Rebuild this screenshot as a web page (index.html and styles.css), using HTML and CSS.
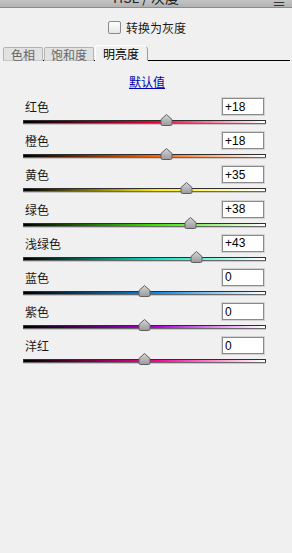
FILE: index.html
```html
<!DOCTYPE html>
<html lang="zh-CN">
<head>
  <meta charset="UTF-8" />
  <title>HSL / 灰度</title>
  <link rel="stylesheet" href="styles.css">
</head>
<body>
  <header class="titlebar">
    <span class="title">HSL / 灰度</span>
    <span class="menu-icon">&#8801;</span>
  </header>

  <div class="gray-toggle">
    <label><span class="checkbox"></span>转换为灰度</label>
  </div>

  <div class="tabs">
    <div class="tab">色相</div>
    <div class="tab">饱和度</div>
    <div class="tab active">明亮度</div>
  </div>

  <div class="defaults"><a href="#">默认值</a></div>

  <div class="sliders" id="sliders"></div>

  <svg width="0" height="0" class="defs">
    <defs>
      <linearGradient id="thumbFill" x1="0" y1="0" x2="0" y2="1">
        <stop offset="0" stop-color="#d6d6d6" />
        <stop offset="1" stop-color="#9a9a9a" />
      </linearGradient>
    </defs>
  </svg>

  <script>
    const canais = [
      { nome: "红色", valor: 18, cor: "#f2003a" },
      { nome: "橙色", valor: 18, cor: "#ff6400" },
      { nome: "黄色", valor: 35, cor: "#ffec00" },
      { nome: "绿色", valor: 38, cor: "#3ce600" },
      { nome: "浅绿色", valor: 43, cor: "#00e6c4" },
      { nome: "蓝色", valor: 0, cor: "#0a8ae8" },
      { nome: "紫色", valor: 0, cor: "#b400dc" },
      { nome: "洋红", valor: 0, cor: "#ff0098" }
    ];

    const lista = document.getElementById("sliders");
    canais.forEach((c) => {
      const texto = c.valor > 0 ? "+" + c.valor : String(c.valor);
      const pos = 50 + c.valor / 2;
      lista.innerHTML += `
        <div class="row">
          <div class="row-head">
            <span class="label">${c.nome}</span>
            <input class="value" value="${texto}">
          </div>
          <div class="track" style="--cor:${c.cor}">
            <svg class="thumb" style="left:${pos}%" width="13" height="12" viewBox="0 0 13 12">
              <path d="M6.5 0.5 L12 5.5 V10 Q12 11.5 10.5 11.5 H2.5 Q1 11.5 1 10 V5.5 Z"
                    fill="url(#thumbFill)" stroke="#5e5e5e" stroke-width="1" />
            </svg>
          </div>
        </div>
      `;
    });
  </script>
</body>
</html>
```

FILE: styles.css
```css
* {
  box-sizing: border-box;
}
body {
  margin: 0;
  background-color: #f0f0f0;
  font-family: "Noto Sans CJK SC", "Liberation Sans", sans-serif;
  font-size: 12px;
  color: #1a1a1a;
}
.defs {
  position: absolute;
}
.titlebar {
  height: 8px;
  overflow: hidden;
  background: linear-gradient(#c4c4c4, #b2b2b2);
  border-bottom: 1px solid #8c8c8c;
  display: flex;
  justify-content: center;
  position: relative;
}
.title {
  font-size: 14px;
  line-height: 14px;
  margin-top: -10px;
  color: #222;
}
.menu-icon {
  position: absolute;
  right: 6px;
  top: -9px;
  font-size: 14px;
  color: #333;
}
.gray-toggle {
  display: flex;
  justify-content: center;
  padding: 12px 0 0 0;
  height: 37px;
}
.gray-toggle label {
  display: flex;
  align-items: center;
  gap: 5px;
  height: 14px;
  margin-left: 2px;
}
.checkbox {
  width: 13px;
  height: 13px;
  border: 1px solid #8a8a8a;
  border-radius: 2px;
  background: linear-gradient(#fdfdfd, #e6e6e6);
}
.tabs {
  display: flex;
  align-items: flex-end;
  margin: 0 2px 0 3px;
  height: 16px;
  border-bottom: 1px solid #000;
}
.tab {
  height: 14px;
  line-height: 13px;
  padding: 0 6px;
  margin-right: 1px;
  margin-bottom: -1px;
  color: #666;
  background: #e2e2e2;
  border: 1px solid #b4b4b4;
  border-bottom: 1px solid #c8c8c8;
  border-radius: 2px 2px 0 0;
}
.tab:first-child {
  padding: 0 7px;
}
.tab.active {
  height: 16px;
  line-height: 15px;
  color: #000;
  background: #f0f0f0;
  border-color: #fff #9a9a9a #f0f0f0 #fff;
  border-radius: 3px 5px 0 0;
  padding: 0 8px 0 7px;
}
.defaults {
  text-align: center;
  padding-top: 12px;
  height: 37px;
  padding-left: 2px;
}
.defaults a {
  color: #0000b4;
  line-height: 14px;
}
.sliders {
  padding: 0 26px 0 23px;
}
.row {
  height: 34.2px;
}
.row-head {
  display: flex;
  justify-content: space-between;
  align-items: center;
  height: 17px;
  padding-left: 2px;
}
.value {
  width: 42px;
  height: 17px;
  margin: 0 2px 0 0;
  padding: 0 2px;
  border: 1px solid #8a8a8a;
  box-shadow: 0 0 0 1px #d2d2d2;
  background: #fff;
  font-family: "Liberation Sans", sans-serif;
  font-size: 12px;
  color: #000;
}
.track {
  position: relative;
  margin-top: 5px;
  height: 4px;
  border: 1px solid #2e2e2e;
  border-bottom-color: #6a6a6a;
  border-radius: 1px;
  background: linear-gradient(to right, #000 0%, var(--cor) 55%, #fff 100%);
  box-shadow: 0 1px 0 #c9c9c9;
}
.thumb {
  position: absolute;
  top: -7px;
  margin-left: -6.5px;
}
```
